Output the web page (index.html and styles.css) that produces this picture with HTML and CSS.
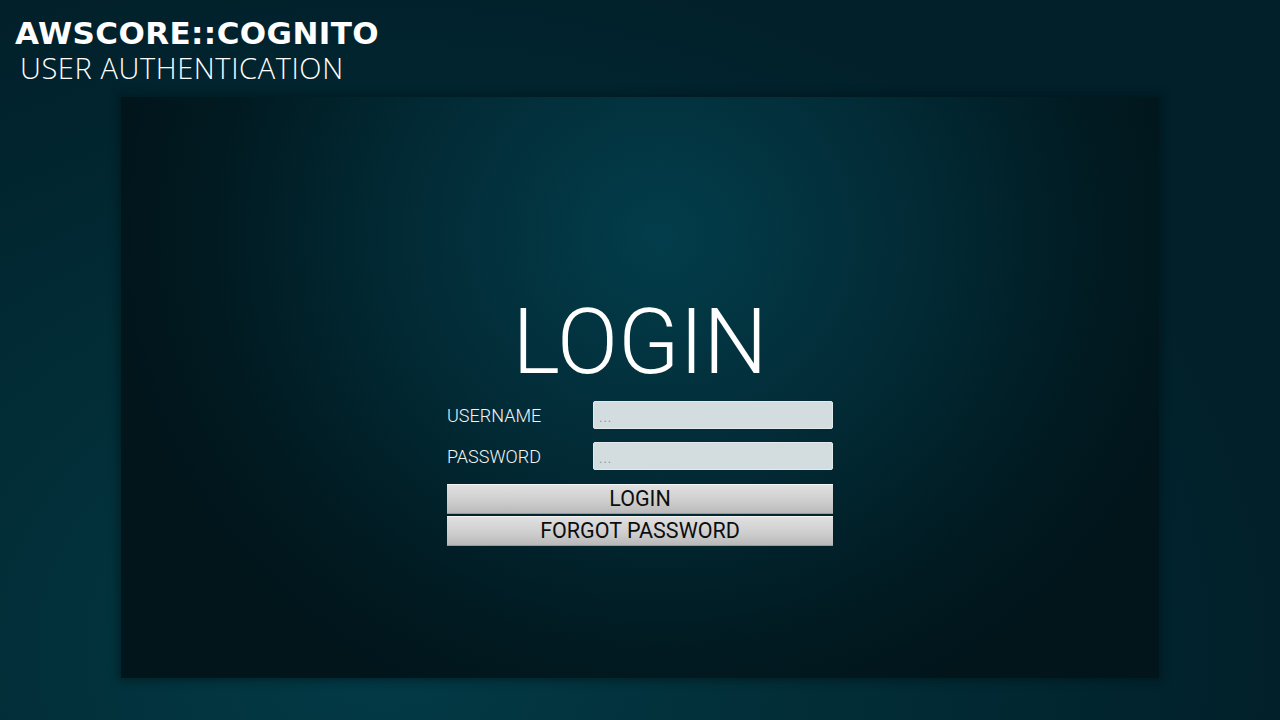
FILE: index.html
```html
<!DOCTYPE html>
<html>
<head>
<meta charset="utf-8">
<link rel="stylesheet" href="styles.css">
</head>
<body>
<div class="page">
  <header class="brand">
    <div class="brand-title">AWSCORE::COGNITO</div>
    <div class="brand-sub">USER AUTHENTICATION</div>
  </header>
  <main class="panel">
    <div class="login">
      <h1 class="login-title">LOGIN</h1>
      <div class="field">
        <label class="field-label">USERNAME</label>
        <input class="field-input" type="text" placeholder="...">
      </div>
      <div class="field">
        <label class="field-label">PASSWORD</label>
        <input class="field-input" type="password" placeholder="...">
      </div>
      <div class="actions">
        <button class="btn">LOGIN</button>
        <button class="btn">FORGOT PASSWORD</button>
      </div>
    </div>
  </main>
</div>
</body>
</html>
```
FILE: styles.css
```css
html, body {
  margin: 0;
  padding: 0;
}
body {
  width: 1280px;
  height: 720px;
  overflow: hidden;
  font-family: Roboto, "Liberation Sans", sans-serif;
}
.page {
  width: 1280px;
  height: 720px;
  box-sizing: border-box;
  background: radial-gradient(ellipse 900px 700px at 30% 90%, #023b47 0%, #022e38 45%, #01202a 100%);
  display: flex;
  flex-direction: column;
}
.brand {
  height: 97px;
  box-sizing: border-box;
  padding: 18px 0 0 15px;
  color: #fff;
}
.brand-title {
  font-family: "DejaVu Sans", sans-serif;
  font-weight: 700;
  font-size: 31px;
  line-height: 30px;
  letter-spacing: 0.4px;
}
.brand-sub {
  font-family: "Open Sans", sans-serif;
  font-weight: 300;
  font-size: 29px;
  line-height: 38px;
  letter-spacing: 0.6px;
  padding-left: 5px;
  margin-top: 1px;
}
.panel {
  margin-left: 121px;
  width: 1038px;
  height: 581px;
  background: radial-gradient(ellipse 560px 520px at 52% 24%, #033d4b 0%, #022b36 45%, #011a21 80%, #01151b 100%);
  box-shadow: 0 0 8px 3px rgba(0, 15, 20, 0.45);
  display: flex;
  justify-content: center;
}
.login {
  width: 386px;
  padding-top: 200px;
  display: flex;
  flex-direction: column;
}
.login-title {
  margin: 0 0 12px 0;
  font-weight: 300;
  font-size: 90px;
  line-height: 92px;
  color: #fff;
  text-align: center;
}
.field {
  display: flex;
  align-items: center;
  height: 28px;
  margin-bottom: 13px;
}
.field-label {
  width: 146px;
  color: #f2f5f6;
  font-weight: 300;
  font-size: 18px;
}
.field-input {
  width: 240px;
  height: 28px;
  box-sizing: border-box;
  border: 1px solid #e3eaec;
  border-radius: 2px;
  background: #d3dde0;
  padding: 4px 5px 0;
  font-family: Roboto, sans-serif;
  font-size: 13px;
  color: #555;
  outline: none;
}
.field-input::placeholder {
  color: #8a9699;
  letter-spacing: 1px;
}
.actions {
  display: flex;
  flex-direction: column;
  gap: 2px;
  margin-top: 1px;
}
.btn {
  height: 30px;
  width: 386px;
  box-sizing: border-box;
  border: none;
  border-top: 1px solid #f4f4f4;
  border-bottom: 1px solid #9a9a9a;
  background: linear-gradient(#e0e0e0, #cdcdcd 60%, #b9b9b9);
  font-family: Roboto, sans-serif;
  font-size: 21.5px;
  color: #0d0d0d;
  padding: 0;
  line-height: 28px;
}
```
